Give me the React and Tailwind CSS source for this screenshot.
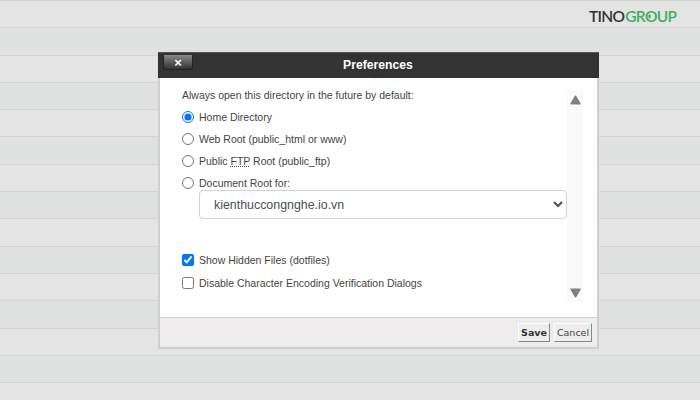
import React from 'react';

const rows = Array.from({ length: 15 }, (_, i) => i);
const sans = 'font-["Liberation_Sans",Arial,sans-serif]';

function Option({ type = 'radio', checked = false, children, className = '' }) {
  return (
    <label className={`flex items-center h-[22px] text-[10.5px] leading-[14px] text-[#444] ${className}`}>
      <input
        type={type}
        name={type === 'radio' ? 'dir' : undefined}
        defaultChecked={checked}
        className="m-0 mr-[5px] w-[12px] h-[12px] shrink-0"
      />
      <span>{children}</span>
    </label>
  );
}

export default function App() {
  return (
    <div className={`relative w-[700px] h-[400px] overflow-hidden bg-[#e3e3e3] ${sans}`}>
      {rows.map((i) => (
        <div
          key={i}
          className={`h-[27.3px] border-t border-[#d4d4d4] ${i % 2 === 0 ? 'bg-[#e4e4e4]' : 'bg-[#e0e2e1]'}`}
        />
      ))}

      <div className="absolute top-[5px] left-[589px] flex items-center h-[24px] text-[15.5px] font-['Lato',sans-serif] font-semibold tracking-[-0.7px] leading-none">
        <span className="text-[#333333]">TINO</span>
        <span className="relative ml-[1px] text-[#3fae5a]">
          GROUP
          <svg viewBox="0 0 10 10" className="absolute left-[21px] top-[4px] w-[7px] h-[7px]">
            <path d="M5 1.5 7.5 5H6.2V8H3.8V5H2.5Z" fill="#3fae5a" />
          </svg>
        </span>
      </div>

      <div className="absolute left-[158px] top-[52px] w-[441px] h-[297px] flex flex-col bg-white border-2 border-t-0 border-[#cfcfcf]">
        <div className="relative -mx-[2px] h-[26px] shrink-0 flex items-center justify-center bg-[#333333] border-t border-[#555]">
          <button className="absolute left-[5px] top-[2px] w-[30px] h-[15px] flex items-center justify-center rounded-b-[3px] border border-t-0 border-[#222] bg-gradient-to-b from-[#8a8a8a] to-[#333] text-white text-[13px] font-bold leading-none">
            ×
          </button>
          <span className="text-white text-[12.2px] font-bold -mt-[1px] -ml-[1px]">Preferences</span>
        </div>

        <div className="flex-1 flex min-h-0">
          <div className="w-[408px] pl-[22px] pt-[10px]">
            <div className="h-[16px] flex items-center text-[10.5px] text-[#444] mb-[2px]">
              Always open this directory in the future by default:
            </div>
            <Option checked>Home Directory</Option>
            <Option>Web Root (public_html or www)</Option>
            <Option>
              Public <abbr title="File Transfer Protocol" className="underline decoration-dotted">FTP</abbr> Root (public_ftp)
            </Option>
            <Option>Document Root for:</Option>
            <div className="pl-[17px] mt-[-4px]">
              <select className="w-[368px] h-[29px] bg-white border border-[#ced4da] rounded-[4px] px-[10px] text-[12.4px] text-[#495057]">
                <option>kienthuccongnghe.io.vn</option>
              </select>
            </div>
            <div className="h-[30px]" />
            <Option type="checkbox" checked>Show Hidden Files (dotfiles)</Option>
            <Option type="checkbox" className="mt-[1px]">Disable Character Encoding Verification Dialogs</Option>
          </div>
          <div className="w-[16px] mt-[12px] mb-[15px] bg-[#fafafa] flex flex-col items-center justify-between pt-[5px] pb-[4px] -ml-[1px]">
            <svg viewBox="0 0 11 10" className="w-[11px] h-[10px]">
              <path d="M5.5 1.2 10 8.8H1Z" fill="#808080" stroke="#808080" strokeWidth="1.5" strokeLinejoin="round" />
            </svg>
            <svg viewBox="0 0 11 10" className="w-[11px] h-[10px]">
              <path d="M5.5 8.8 10 1.2H1Z" fill="#808080" stroke="#808080" strokeWidth="1.5" strokeLinejoin="round" />
            </svg>
          </div>
        </div>

        <div className="h-[30px] shrink-0 flex items-center justify-end gap-[4px] pr-[5px] bg-[#eeecec] border-t border-[#d0d0d0] font-['DejaVu_Sans',sans-serif]">
          <button className="w-[32px] h-[19px] bg-[#eeeeee] border border-t-white border-l-white border-r-[#888] border-b-[#888] text-[9.5px] font-bold text-[#333] leading-none">
            Save
          </button>
          <button className="w-[38px] h-[19px] bg-[#eeeeee] border border-t-white border-l-white border-r-[#888] border-b-[#888] text-[9.5px] text-[#444] leading-none">
            Cancel
          </button>
        </div>
      </div>
    </div>
  );
}
